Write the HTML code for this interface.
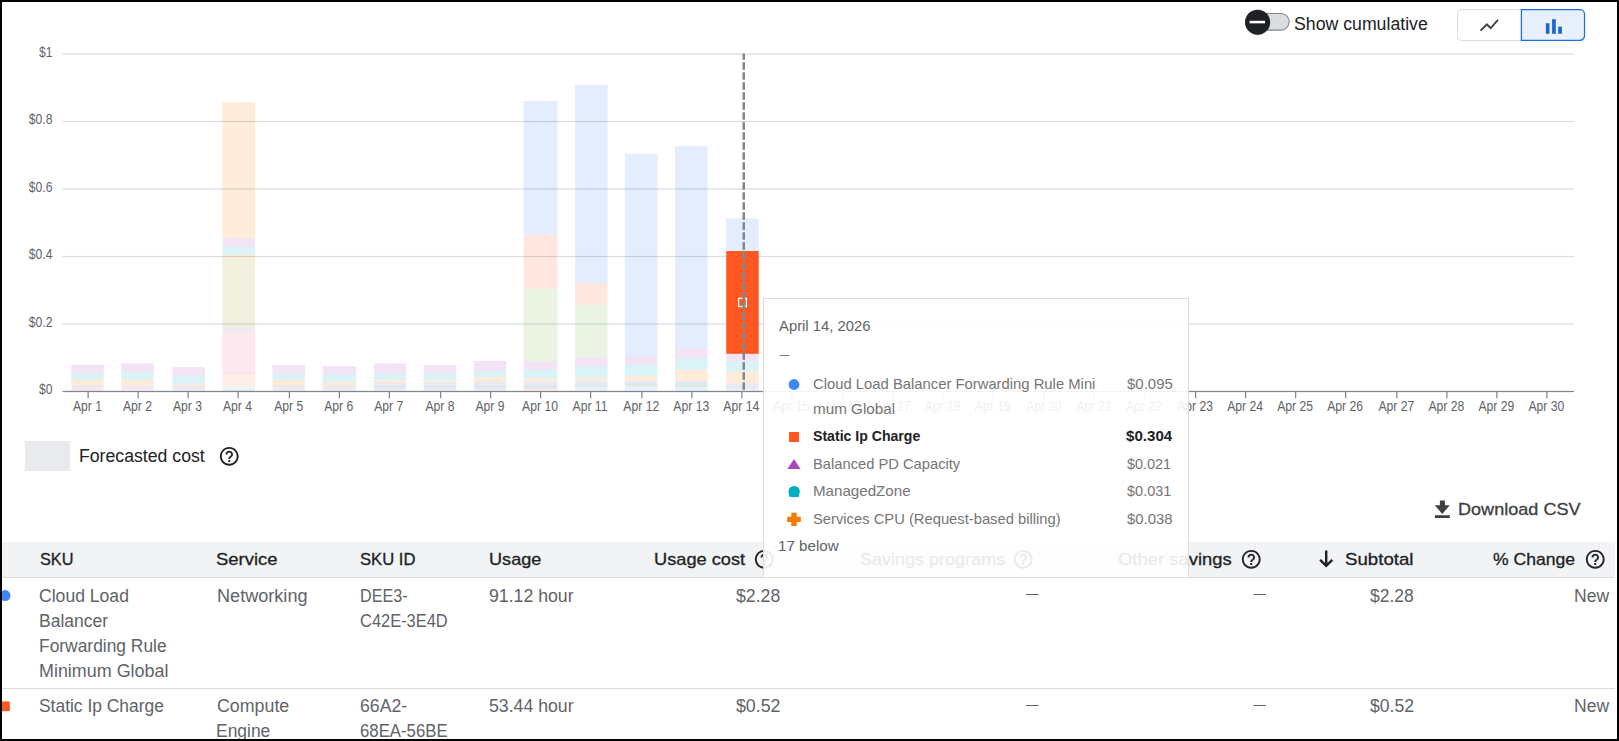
<!DOCTYPE html>
<html lang="en"><head><meta charset="utf-8"><title>Cost breakdown</title>
<style>
html,body{margin:0;padding:0}
body{position:relative;width:1619px;height:741px;overflow:hidden;background:#fff;font-family:"Liberation Sans",Arial,sans-serif;}
#chart{position:absolute;left:0;top:0}
.ax{font-family:"Liberation Sans",Arial,sans-serif;font-size:13.9px;fill:#5f6368}
.t{position:absolute;white-space:nowrap;line-height:0;height:0;display:block;transform-origin:0 0}
.t::before{content:"";display:inline-block;height:0;width:0}
.ic{position:absolute;display:block}
.abs{position:absolute}
#frame{position:absolute;left:0;top:0;width:1615px;height:737px;border:2px solid #000;z-index:50}
#thead{position:absolute;left:2px;top:542px;width:1612.5px;height:35px;background:#f1f3f4;border-bottom:1px solid #dadce0}
.rowline{position:absolute;left:2px;width:1612.5px;height:1px;background:#dadce0}
#tip{position:absolute;left:763px;top:298px;width:424px;height:278px;background:rgba(255,255,255,.9);border:1px solid #dadce0;z-index:10}
#tiptext{position:absolute;left:0;top:0;z-index:11}
.dash{position:absolute;height:1.4px;background:#5f6368}

</style></head><body>
<svg id="chart" width="1619" height="430" viewBox="0 0 1619 430">
<rect x="62.5" y="53.375" width="1511.5" height="1.25" fill="#dadce0"/>
<rect x="62.5" y="120.875" width="1511.5" height="1.25" fill="#dadce0"/>
<rect x="62.5" y="188.375" width="1511.5" height="1.25" fill="#dadce0"/>
<rect x="62.5" y="255.875" width="1511.5" height="1.25" fill="#dadce0"/>
<rect x="62.5" y="323.375" width="1511.5" height="1.25" fill="#dadce0"/>
<rect x="71.25" y="364.9" width="32.5" height="8.60" fill="#ab47bc" fill-opacity="0.15"/>
<rect x="71.25" y="373.5" width="32.5" height="6.50" fill="#00acc1" fill-opacity="0.15"/>
<rect x="71.25" y="380.0" width="32.5" height="5.90" fill="#f57c00" fill-opacity="0.15"/>
<rect x="71.25" y="385.9" width="32.5" height="2.20" fill="#5c6bc0" fill-opacity="0.15"/>
<rect x="71.25" y="388.1" width="32.5" height="2.90" fill="#f06292" fill-opacity="0.15"/>
<rect x="121.25" y="363.4" width="32.5" height="8.90" fill="#ab47bc" fill-opacity="0.15"/>
<rect x="121.25" y="372.3" width="32.5" height="7.70" fill="#00acc1" fill-opacity="0.15"/>
<rect x="121.25" y="380.0" width="32.5" height="6.00" fill="#f57c00" fill-opacity="0.15"/>
<rect x="121.25" y="386.0" width="32.5" height="2.10" fill="#5c6bc0" fill-opacity="0.15"/>
<rect x="121.25" y="388.1" width="32.5" height="2.90" fill="#f06292" fill-opacity="0.15"/>
<rect x="172.5" y="367.1" width="32.5" height="8.90" fill="#ab47bc" fill-opacity="0.15"/>
<rect x="172.5" y="376.0" width="32.5" height="7.70" fill="#00acc1" fill-opacity="0.15"/>
<rect x="172.5" y="383.7" width="32.5" height="2.20" fill="#f57c00" fill-opacity="0.15"/>
<rect x="172.5" y="385.9" width="32.5" height="2.70" fill="#5c6bc0" fill-opacity="0.15"/>
<rect x="172.5" y="388.6" width="32.5" height="1.20" fill="#f06292" fill-opacity="0.15"/>
<rect x="172.5" y="389.8" width="32.5" height="1.20" fill="#29b6f6" fill-opacity="0.15"/>
<rect x="222.5" y="102.3" width="32.5" height="135.90" fill="#f57c00" fill-opacity="0.15"/>
<rect x="222.5" y="238.2" width="32.5" height="8.80" fill="#ab47bc" fill-opacity="0.15"/>
<rect x="222.5" y="247.0" width="32.5" height="7.80" fill="#00acc1" fill-opacity="0.15"/>
<rect x="222.5" y="254.8" width="32.5" height="3.90" fill="#f57c00" fill-opacity="0.15"/>
<rect x="222.5" y="258.7" width="32.5" height="69.80" fill="#9e9d24" fill-opacity="0.15"/>
<rect x="222.5" y="328.5" width="32.5" height="2.50" fill="#5c6bc0" fill-opacity="0.15"/>
<rect x="222.5" y="331.0" width="32.5" height="41.20" fill="#f06292" fill-opacity="0.15"/>
<rect x="222.5" y="372.2" width="32.5" height="1.30" fill="#c2185b" fill-opacity="0.15"/>
<rect x="222.5" y="373.5" width="32.5" height="13.70" fill="#ff8a65" fill-opacity="0.15"/>
<rect x="222.5" y="387.2" width="32.5" height="2.80" fill="#26c6da" fill-opacity="0.15"/>
<rect x="222.5" y="390.0" width="32.5" height="1.00" fill="#e91e63" fill-opacity="0.15"/>
<rect x="272.5" y="365.0" width="32.5" height="8.50" fill="#ab47bc" fill-opacity="0.15"/>
<rect x="272.5" y="373.5" width="32.5" height="6.40" fill="#00acc1" fill-opacity="0.15"/>
<rect x="272.5" y="379.9" width="32.5" height="6.00" fill="#f57c00" fill-opacity="0.15"/>
<rect x="272.5" y="385.9" width="32.5" height="2.20" fill="#5c6bc0" fill-opacity="0.15"/>
<rect x="272.5" y="388.1" width="32.5" height="1.80" fill="#f06292" fill-opacity="0.15"/>
<rect x="272.5" y="389.9" width="32.5" height="1.10" fill="#29b6f6" fill-opacity="0.15"/>
<rect x="322.5" y="366.1" width="33.75" height="8.60" fill="#ab47bc" fill-opacity="0.15"/>
<rect x="322.5" y="374.7" width="33.75" height="7.20" fill="#00acc1" fill-opacity="0.15"/>
<rect x="322.5" y="381.9" width="33.75" height="4.00" fill="#f57c00" fill-opacity="0.15"/>
<rect x="322.5" y="385.9" width="33.75" height="2.20" fill="#5c6bc0" fill-opacity="0.15"/>
<rect x="322.5" y="388.1" width="33.75" height="1.80" fill="#f06292" fill-opacity="0.15"/>
<rect x="322.5" y="389.9" width="33.75" height="1.10" fill="#29b6f6" fill-opacity="0.15"/>
<rect x="373.75" y="363.4" width="32.5" height="10.10" fill="#ab47bc" fill-opacity="0.15"/>
<rect x="373.75" y="373.5" width="32.5" height="6.40" fill="#00acc1" fill-opacity="0.15"/>
<rect x="373.75" y="379.9" width="32.5" height="3.20" fill="#f57c00" fill-opacity="0.15"/>
<rect x="373.75" y="383.1" width="32.5" height="2.80" fill="#5c6bc0" fill-opacity="0.15"/>
<rect x="373.75" y="385.9" width="32.5" height="2.20" fill="#00796b" fill-opacity="0.15"/>
<rect x="373.75" y="388.1" width="32.5" height="1.80" fill="#f06292" fill-opacity="0.15"/>
<rect x="373.75" y="389.9" width="32.5" height="1.10" fill="#29b6f6" fill-opacity="0.15"/>
<rect x="423.75" y="365.0" width="32.5" height="8.50" fill="#ab47bc" fill-opacity="0.15"/>
<rect x="423.75" y="373.5" width="32.5" height="6.40" fill="#00acc1" fill-opacity="0.15"/>
<rect x="423.75" y="379.9" width="32.5" height="2.20" fill="#f57c00" fill-opacity="0.15"/>
<rect x="423.75" y="382.1" width="32.5" height="3.80" fill="#5c6bc0" fill-opacity="0.15"/>
<rect x="423.75" y="385.9" width="32.5" height="2.20" fill="#00796b" fill-opacity="0.15"/>
<rect x="423.75" y="388.1" width="32.5" height="1.80" fill="#f06292" fill-opacity="0.15"/>
<rect x="423.75" y="389.9" width="32.5" height="1.10" fill="#29b6f6" fill-opacity="0.15"/>
<rect x="473.75" y="361.0" width="32.5" height="9.90" fill="#ab47bc" fill-opacity="0.15"/>
<rect x="473.75" y="370.9" width="32.5" height="6.30" fill="#00acc1" fill-opacity="0.15"/>
<rect x="473.75" y="377.2" width="32.5" height="4.90" fill="#f57c00" fill-opacity="0.15"/>
<rect x="473.75" y="382.1" width="32.5" height="3.80" fill="#5c6bc0" fill-opacity="0.15"/>
<rect x="473.75" y="385.9" width="32.5" height="2.20" fill="#00796b" fill-opacity="0.15"/>
<rect x="473.75" y="388.1" width="32.5" height="1.80" fill="#f06292" fill-opacity="0.15"/>
<rect x="473.75" y="389.9" width="32.5" height="1.10" fill="#29b6f6" fill-opacity="0.15"/>
<rect x="523.75" y="101.0" width="33.75" height="133.70" fill="#4285f4" fill-opacity="0.15"/>
<rect x="523.75" y="234.7" width="33.75" height="53.90" fill="#ff5722" fill-opacity="0.15"/>
<rect x="523.75" y="288.6" width="33.75" height="72.40" fill="#7cb342" fill-opacity="0.15"/>
<rect x="523.75" y="361.0" width="33.75" height="8.90" fill="#ab47bc" fill-opacity="0.15"/>
<rect x="523.75" y="369.9" width="33.75" height="8.50" fill="#00acc1" fill-opacity="0.15"/>
<rect x="523.75" y="378.4" width="33.75" height="3.80" fill="#f57c00" fill-opacity="0.15"/>
<rect x="523.75" y="382.2" width="33.75" height="3.70" fill="#5c6bc0" fill-opacity="0.15"/>
<rect x="523.75" y="385.9" width="33.75" height="2.50" fill="#00796b" fill-opacity="0.15"/>
<rect x="523.75" y="388.4" width="33.75" height="2.60" fill="#f06292" fill-opacity="0.15"/>
<rect x="575.0" y="85.0" width="32.5" height="198.40" fill="#4285f4" fill-opacity="0.15"/>
<rect x="575.0" y="283.4" width="32.5" height="21.40" fill="#ff5722" fill-opacity="0.15"/>
<rect x="575.0" y="304.8" width="32.5" height="52.20" fill="#7cb342" fill-opacity="0.15"/>
<rect x="575.0" y="357.0" width="32.5" height="8.90" fill="#ab47bc" fill-opacity="0.15"/>
<rect x="575.0" y="365.9" width="32.5" height="11.20" fill="#00acc1" fill-opacity="0.15"/>
<rect x="575.0" y="377.1" width="32.5" height="3.90" fill="#f57c00" fill-opacity="0.15"/>
<rect x="575.0" y="381.0" width="32.5" height="4.00" fill="#5c6bc0" fill-opacity="0.15"/>
<rect x="575.0" y="385.0" width="32.5" height="2.00" fill="#00796b" fill-opacity="0.15"/>
<rect x="575.0" y="387.0" width="32.5" height="1.20" fill="#f06292" fill-opacity="0.15"/>
<rect x="575.0" y="388.2" width="32.5" height="2.00" fill="#29b6f6" fill-opacity="0.15"/>
<rect x="575.0" y="390.2" width="32.5" height="0.80" fill="#f06292" fill-opacity="0.15"/>
<rect x="625.0" y="153.6" width="32.5" height="202.30" fill="#4285f4" fill-opacity="0.15"/>
<rect x="625.0" y="355.9" width="32.5" height="9.00" fill="#ab47bc" fill-opacity="0.15"/>
<rect x="625.0" y="364.9" width="32.5" height="11.10" fill="#00acc1" fill-opacity="0.15"/>
<rect x="625.0" y="376.0" width="32.5" height="5.00" fill="#f57c00" fill-opacity="0.15"/>
<rect x="625.0" y="381.0" width="32.5" height="2.40" fill="#5c6bc0" fill-opacity="0.15"/>
<rect x="625.0" y="383.4" width="32.5" height="2.60" fill="#00796b" fill-opacity="0.15"/>
<rect x="625.0" y="386.0" width="32.5" height="1.20" fill="#f06292" fill-opacity="0.15"/>
<rect x="625.0" y="387.2" width="32.5" height="3.00" fill="#29b6f6" fill-opacity="0.15"/>
<rect x="625.0" y="390.2" width="32.5" height="0.80" fill="#f06292" fill-opacity="0.15"/>
<rect x="675.0" y="146.1" width="32.5" height="202.10" fill="#4285f4" fill-opacity="0.15"/>
<rect x="675.0" y="348.2" width="32.5" height="10.10" fill="#ab47bc" fill-opacity="0.15"/>
<rect x="675.0" y="358.3" width="32.5" height="11.60" fill="#00acc1" fill-opacity="0.15"/>
<rect x="675.0" y="369.9" width="32.5" height="11.10" fill="#f57c00" fill-opacity="0.15"/>
<rect x="675.0" y="381.0" width="32.5" height="2.40" fill="#5c6bc0" fill-opacity="0.15"/>
<rect x="675.0" y="383.4" width="32.5" height="3.60" fill="#00796b" fill-opacity="0.15"/>
<rect x="675.0" y="387.0" width="32.5" height="1.60" fill="#f06292" fill-opacity="0.15"/>
<rect x="675.0" y="388.6" width="32.5" height="2.40" fill="#29b6f6" fill-opacity="0.15"/>
<rect x="726.25" y="218.4" width="32.5" height="32.60" fill="#4285f4" fill-opacity="0.15"/>
<rect x="726.25" y="251.0" width="32.5" height="102.80" fill="#ff5722"/>
<rect x="726.25" y="353.8" width="32.5" height="7.20" fill="#ab47bc" fill-opacity="0.15"/>
<rect x="726.25" y="361.0" width="32.5" height="10.20" fill="#00acc1" fill-opacity="0.15"/>
<rect x="726.25" y="371.2" width="32.5" height="12.20" fill="#f57c00" fill-opacity="0.15"/>
<rect x="726.25" y="383.4" width="32.5" height="3.60" fill="#5c6bc0" fill-opacity="0.15"/>
<rect x="726.25" y="387.0" width="32.5" height="1.00" fill="#00796b" fill-opacity="0.15"/>
<rect x="726.25" y="388.0" width="32.5" height="1.80" fill="#f06292" fill-opacity="0.15"/>
<rect x="726.25" y="389.8" width="32.5" height="1.20" fill="#29b6f6" fill-opacity="0.15"/>
<rect x="62.5" y="390.875" width="1511.5" height="1.25" fill="#80868b"/>
<rect x="87.500" y="392" width="1.25" height="6.25" fill="#80868b"/>
<rect x="137.500" y="392" width="1.25" height="6.25" fill="#80868b"/>
<rect x="187.500" y="392" width="1.25" height="6.25" fill="#80868b"/>
<rect x="237.500" y="392" width="1.25" height="6.25" fill="#80868b"/>
<rect x="288.750" y="392" width="1.25" height="6.25" fill="#80868b"/>
<rect x="338.750" y="392" width="1.25" height="6.25" fill="#80868b"/>
<rect x="388.750" y="392" width="1.25" height="6.25" fill="#80868b"/>
<rect x="440.000" y="392" width="1.25" height="6.25" fill="#80868b"/>
<rect x="490.000" y="392" width="1.25" height="6.25" fill="#80868b"/>
<rect x="540.000" y="392" width="1.25" height="6.25" fill="#80868b"/>
<rect x="590.000" y="392" width="1.25" height="6.25" fill="#80868b"/>
<rect x="641.250" y="392" width="1.25" height="6.25" fill="#80868b"/>
<rect x="691.250" y="392" width="1.25" height="6.25" fill="#80868b"/>
<rect x="741.250" y="392" width="1.25" height="6.25" fill="#80868b"/>
<rect x="791.250" y="392" width="1.25" height="6.25" fill="#80868b"/>
<rect x="842.500" y="392" width="1.25" height="6.25" fill="#80868b"/>
<rect x="892.500" y="392" width="1.25" height="6.25" fill="#80868b"/>
<rect x="942.500" y="392" width="1.25" height="6.25" fill="#80868b"/>
<rect x="992.500" y="392" width="1.25" height="6.25" fill="#80868b"/>
<rect x="1043.750" y="392" width="1.25" height="6.25" fill="#80868b"/>
<rect x="1093.750" y="392" width="1.25" height="6.25" fill="#80868b"/>
<rect x="1143.750" y="392" width="1.25" height="6.25" fill="#80868b"/>
<rect x="1195.000" y="392" width="1.25" height="6.25" fill="#80868b"/>
<rect x="1245.000" y="392" width="1.25" height="6.25" fill="#80868b"/>
<rect x="1295.000" y="392" width="1.25" height="6.25" fill="#80868b"/>
<rect x="1345.000" y="392" width="1.25" height="6.25" fill="#80868b"/>
<rect x="1396.250" y="392" width="1.25" height="6.25" fill="#80868b"/>
<rect x="1446.250" y="392" width="1.25" height="6.25" fill="#80868b"/>
<rect x="1496.250" y="392" width="1.25" height="6.25" fill="#80868b"/>
<rect x="1546.250" y="392" width="1.25" height="6.25" fill="#80868b"/>
<text transform="translate(87.53,411) scale(.875,1)" text-anchor="middle" class="ax">Apr 1</text>
<text transform="translate(137.53,411) scale(.875,1)" text-anchor="middle" class="ax">Apr 2</text>
<text transform="translate(187.53,411) scale(.875,1)" text-anchor="middle" class="ax">Apr 3</text>
<text transform="translate(237.53,411) scale(.875,1)" text-anchor="middle" class="ax">Apr 4</text>
<text transform="translate(288.77,411) scale(.875,1)" text-anchor="middle" class="ax">Apr 5</text>
<text transform="translate(338.77,411) scale(.875,1)" text-anchor="middle" class="ax">Apr 6</text>
<text transform="translate(388.77,411) scale(.875,1)" text-anchor="middle" class="ax">Apr 7</text>
<text transform="translate(440.02,411) scale(.875,1)" text-anchor="middle" class="ax">Apr 8</text>
<text transform="translate(490.02,411) scale(.875,1)" text-anchor="middle" class="ax">Apr 9</text>
<text transform="translate(540.02,411) scale(.875,1)" text-anchor="middle" class="ax">Apr 10</text>
<text transform="translate(590.02,411) scale(.875,1)" text-anchor="middle" class="ax">Apr 11</text>
<text transform="translate(641.27,411) scale(.875,1)" text-anchor="middle" class="ax">Apr 12</text>
<text transform="translate(691.27,411) scale(.875,1)" text-anchor="middle" class="ax">Apr 13</text>
<text transform="translate(741.27,411) scale(.875,1)" text-anchor="middle" class="ax">Apr 14</text>
<text transform="translate(791.27,411) scale(.875,1)" text-anchor="middle" class="ax">Apr 15</text>
<text transform="translate(842.52,411) scale(.875,1)" text-anchor="middle" class="ax">Apr 16</text>
<text transform="translate(892.52,411) scale(.875,1)" text-anchor="middle" class="ax">Apr 17</text>
<text transform="translate(942.52,411) scale(.875,1)" text-anchor="middle" class="ax">Apr 18</text>
<text transform="translate(992.52,411) scale(.875,1)" text-anchor="middle" class="ax">Apr 19</text>
<text transform="translate(1043.78,411) scale(.875,1)" text-anchor="middle" class="ax">Apr 20</text>
<text transform="translate(1093.78,411) scale(.875,1)" text-anchor="middle" class="ax">Apr 21</text>
<text transform="translate(1143.78,411) scale(.875,1)" text-anchor="middle" class="ax">Apr 22</text>
<text transform="translate(1195.03,411) scale(.875,1)" text-anchor="middle" class="ax">Apr 23</text>
<text transform="translate(1245.03,411) scale(.875,1)" text-anchor="middle" class="ax">Apr 24</text>
<text transform="translate(1295.03,411) scale(.875,1)" text-anchor="middle" class="ax">Apr 25</text>
<text transform="translate(1345.03,411) scale(.875,1)" text-anchor="middle" class="ax">Apr 26</text>
<text transform="translate(1396.28,411) scale(.875,1)" text-anchor="middle" class="ax">Apr 27</text>
<text transform="translate(1446.28,411) scale(.875,1)" text-anchor="middle" class="ax">Apr 28</text>
<text transform="translate(1496.28,411) scale(.875,1)" text-anchor="middle" class="ax">Apr 29</text>
<text transform="translate(1546.28,411) scale(.875,1)" text-anchor="middle" class="ax">Apr 30</text>
<text transform="translate(52.4,56.7) scale(.875,1)" text-anchor="end" class="ax">$1</text>
<text transform="translate(52.4,124.2) scale(.875,1)" text-anchor="end" class="ax">$0.8</text>
<text transform="translate(52.4,191.7) scale(.875,1)" text-anchor="end" class="ax">$0.6</text>
<text transform="translate(52.4,259.2) scale(.875,1)" text-anchor="end" class="ax">$0.4</text>
<text transform="translate(52.4,326.7) scale(.875,1)" text-anchor="end" class="ax">$0.2</text>
<text transform="translate(52.4,394.2) scale(.875,1)" text-anchor="end" class="ax">$0</text>
<line x1="743.75" y1="53.4" x2="743.75" y2="391" stroke="#80868b" stroke-width="2.5" stroke-dasharray="7.5 2.5" stroke-dashoffset="1.1"/>
<line x1="743.75" y1="251" x2="743.75" y2="353.8" stroke="#788c96" stroke-width="2.5" stroke-dasharray="7.5 2.5" stroke-dashoffset="8.7"/>
<rect x="738.6" y="298.3" width="7.8" height="8.2" fill="none" stroke="#fff" stroke-width="1.25"/>
<line x1="743.75" y1="292.3" x2="743.75" y2="312.3" stroke="#788c96" stroke-width="2.5" stroke-dasharray="7.5 2.5"/>
</svg>
<svg class="ic" style="left:1236px;top:2px;overflow:visible" width="62" height="40" viewBox="1236 2 62 40"><rect x="1245.6" y="13.55" width="43.6" height="16.6" rx="8.3" fill="#dadce0" stroke="#80868b" stroke-width="1.1"/><circle cx="1257.6" cy="22.9" r="12.6" fill="#000" opacity=".12"/><circle cx="1257.6" cy="22.5" r="12.9" fill="#000" opacity=".06"/><circle cx="1257.6" cy="22.15" r="12.5" fill="#202124"/><rect x="1249.6" y="20.8" width="15.4" height="2.55" fill="#fff"/></svg>
<div class="abs" style="left:1457px;top:9px;width:64px;height:30px;border:1px solid #dadce0;border-right:none;border-radius:5px 0 0 5px;background:#fff"></div>
<svg class="ic" style="left:1518px;top:6px" width="70" height="38" viewBox="1518 6 70 38"><path d="M1521.4 9.5H1580a4.5 4.5 0 0 1 4.5 4.5V35.8a4.5 4.5 0 0 1 -4.5 4.5H1521.4z" fill="#e8f0fe" stroke="#1a6ddd" stroke-width="1.25"/></svg>
<svg class="ic" style="left:1478.25px;top:13.7px" width="22.5" height="22.5" viewBox="0 0 24 24"><path fill="#3c4043" d="M3.5 18.49l6-6.01 4 4L22 6.92l-1.41-1.41-7.09 7.97-4-4L2 16.99z"/></svg>
<svg class="ic" style="left:1540px;top:15px" width="30" height="24" viewBox="1540 15 30 24"><g fill="#1967d2"><rect x="1545.9" y="23.2" width="3.55" height="10.6"/><rect x="1552.1" y="19.2" width="3.7" height="14.6"/><rect x="1558.2" y="26.7" width="3.7" height="7.1"/></g></svg>
<div class="abs" style="left:25px;top:441px;width:45px;height:30px;background:#e8eaed"></div>
<svg class="ic" style="left:218.15px;top:444.95px" width="22.5" height="22.5" viewBox="0 0 24 24"><path fill="#202124" d="M11 18h2v-2h-2v2zm1-16C6.48 2 2 6.48 2 12s4.48 10 10 10 10-4.48 10-10S17.52 2 12 2zm0 18c-4.41 0-8-3.59-8-8s3.59-8 8-8 8 3.59 8 8-3.59 8-8 8zm0-14c-2.21 0-4 1.79-4 4h2c0-1.1.9-2 2-2s2 .9 2 2c0 2-3 1.75-3 5h2c0-2.25 3-2.5 3-5 0-2.21-1.79-4-4-4z"/></svg>
<svg class="ic" style="left:1430px;top:497px" width="24" height="24" viewBox="1430 497 24 24"><path fill="#3c4043" d="M1439.9 500.6H1444.9V505.3H1449.7L1442.3 514L1434.8 505.3H1439.9zM1434.9 515.3H1449.8V518H1434.9z"/></svg>
<div id="thead"></div>
<div class="rowline" style="top:688px"></div>
<svg class="ic" style="left:753.05px;top:548.05px" width="22.5" height="22.5" viewBox="0 0 24 24"><path fill="#202124" d="M11 18h2v-2h-2v2zm1-16C6.48 2 2 6.48 2 12s4.48 10 10 10 10-4.48 10-10S17.52 2 12 2zm0 18c-4.41 0-8-3.59-8-8s3.59-8 8-8 8 3.59 8 8-3.59 8-8 8zm0-14c-2.21 0-4 1.79-4 4h2c0-1.1.9-2 2-2s2 .9 2 2c0 2-3 1.75-3 5h2c0-2.25 3-2.5 3-5 0-2.21-1.79-4-4-4z"/></svg>
<svg class="ic" style="left:1012.15px;top:548.05px" width="22.5" height="22.5" viewBox="0 0 24 24"><path fill="#202124" d="M11 18h2v-2h-2v2zm1-16C6.48 2 2 6.48 2 12s4.48 10 10 10 10-4.48 10-10S17.52 2 12 2zm0 18c-4.41 0-8-3.59-8-8s3.59-8 8-8 8 3.59 8 8-3.59 8-8 8zm0-14c-2.21 0-4 1.79-4 4h2c0-1.1.9-2 2-2s2 .9 2 2c0 2-3 1.75-3 5h2c0-2.25 3-2.5 3-5 0-2.21-1.79-4-4-4z"/></svg>
<svg class="ic" style="left:1240.15px;top:548.05px" width="22.5" height="22.5" viewBox="0 0 24 24"><path fill="#202124" d="M11 18h2v-2h-2v2zm1-16C6.48 2 2 6.48 2 12s4.48 10 10 10 10-4.48 10-10S17.52 2 12 2zm0 18c-4.41 0-8-3.59-8-8s3.59-8 8-8 8 3.59 8 8-3.59 8-8 8zm0-14c-2.21 0-4 1.79-4 4h2c0-1.1.9-2 2-2s2 .9 2 2c0 2-3 1.75-3 5h2c0-2.25 3-2.5 3-5 0-2.21-1.79-4-4-4z"/></svg>
<svg class="ic" style="left:1583.55px;top:548.05px" width="22.5" height="22.5" viewBox="0 0 24 24"><path fill="#202124" d="M11 18h2v-2h-2v2zm1-16C6.48 2 2 6.48 2 12s4.48 10 10 10 10-4.48 10-10S17.52 2 12 2zm0 18c-4.41 0-8-3.59-8-8s3.59-8 8-8 8 3.59 8 8-3.59 8-8 8zm0-14c-2.21 0-4 1.79-4 4h2c0-1.1.9-2 2-2s2 .9 2 2c0 2-3 1.75-3 5h2c0-2.25 3-2.5 3-5 0-2.21-1.79-4-4-4z"/></svg>
<svg class="ic" style="left:1316px;top:548px" width="21" height="22" viewBox="1316 548 21 22"><path d="M1326.2 550.4V566M1320.1 559.8L1326.2 565.9L1332.3 559.8" fill="none" stroke="#202124" stroke-width="2.4"/></svg>
<svg class="ic" style="left:0;top:588px" width="14" height="16" viewBox="0 588 14 16"><circle cx="5" cy="595.6" r="5.5" fill="#4285f4"/></svg>
<svg class="ic" style="left:0;top:699px" width="14" height="16" viewBox="0 699 14 16"><rect x="0.25" y="701.5" width="9.6" height="9.6" fill="#ff5722"/></svg>
<span class="t td" style="left:1026.0px;top:594.4px;font-size:12.2px;color:#5f6368;-webkit-text-stroke:.3px #5f6368">—</span>
<span class="t td" style="left:1253.5px;top:594.4px;font-size:12.2px;color:#5f6368;-webkit-text-stroke:.3px #5f6368">—</span>
<span class="t td" style="left:1026.0px;top:704.7px;font-size:12.2px;color:#5f6368;-webkit-text-stroke:.3px #5f6368">—</span>
<span class="t td" style="left:1253.5px;top:704.7px;font-size:12.2px;color:#5f6368;-webkit-text-stroke:.3px #5f6368">—</span>
<span class="t top" style="left:1294.12px;top:23.60px;font-size:17.5px;color:#202124;transform:scaleX(1.0113)">Show cumulative</span>
<span class="t legend" style="left:79.41px;top:455.90px;font-size:17.5px;color:#202124;transform:scaleX(1.0098)">Forecasted cost</span>
<span class="t dl" style="left:1457.74px;top:509.70px;font-size:17.0px;color:#3c4043;transform:scaleX(1.0629);-webkit-text-stroke:0.3px #3c4043">Download CSV</span>
<span class="t th" style="left:39.78px;top:559.70px;font-size:17.0px;color:#202124;transform:scaleX(0.9582);-webkit-text-stroke:0.3px #202124">SKU</span>
<span class="t th" style="left:216.49px;top:559.70px;font-size:17.0px;color:#202124;transform:scaleX(1.0848);-webkit-text-stroke:0.3px #202124">Service</span>
<span class="t th" style="left:359.87px;top:559.70px;font-size:17.0px;color:#202124;transform:scaleX(0.9778);-webkit-text-stroke:0.3px #202124">SKU ID</span>
<span class="t th" style="left:488.97px;top:559.70px;font-size:17.0px;color:#202124;transform:scaleX(1.0653);-webkit-text-stroke:0.3px #202124">Usage</span>
<span class="t th" style="left:654.26px;top:559.70px;font-size:17.0px;color:#202124;transform:scaleX(1.0714);-webkit-text-stroke:0.3px #202124">Usage cost</span>
<span class="t th" style="left:859.51px;top:559.70px;font-size:17.0px;color:#202124;transform:scaleX(1.0595);-webkit-text-stroke:0.3px #202124">Savings programs</span>
<span class="t th" style="left:1118.39px;top:559.70px;font-size:17.0px;color:#202124;transform:scaleX(1.0841);-webkit-text-stroke:0.3px #202124">Other savings</span>
<span class="t th" style="left:1345.38px;top:559.70px;font-size:17.0px;color:#202124;transform:scaleX(1.0975);-webkit-text-stroke:0.3px #202124">Subtotal</span>
<span class="t th" style="left:1493.05px;top:559.70px;font-size:17.0px;color:#202124;transform:scaleX(1.0346);-webkit-text-stroke:0.3px #202124">% Change</span>
<span class="t td" style="left:39.42px;top:595.70px;font-size:17.5px;color:#5f6368;transform:scaleX(1.0046)">Cloud Load</span>
<span class="t td" style="left:39.42px;top:620.70px;font-size:17.5px;color:#5f6368;transform:scaleX(1.0004)">Balancer</span>
<span class="t td" style="left:39.43px;top:645.70px;font-size:17.5px;color:#5f6368;transform:scaleX(0.9941)">Forwarding Rule</span>
<span class="t td" style="left:39.39px;top:670.70px;font-size:17.5px;color:#5f6368;transform:scaleX(1.0236)">Minimum Global</span>
<span class="t td" style="left:216.88px;top:595.70px;font-size:17.5px;color:#5f6368;transform:scaleX(1.0341)">Networking</span>
<span class="t td" style="left:360.03px;top:595.70px;font-size:17.5px;color:#5f6368;transform:scaleX(0.9215)">DEE3-</span>
<span class="t td" style="left:360.48px;top:620.70px;font-size:17.5px;color:#5f6368;transform:scaleX(0.9397)">C42E-3E4D</span>
<span class="t td" style="left:489.24px;top:595.70px;font-size:17.5px;color:#5f6368;transform:scaleX(1.0106)">91.12 hour</span>
<span class="t td" style="left:736.05px;top:595.70px;font-size:17.5px;color:#5f6368;transform:scaleX(1.0105)">$2.28</span>
<span class="t td" style="left:1369.85px;top:595.70px;font-size:17.5px;color:#5f6368;transform:scaleX(1.0012)">$2.28</span>
<span class="t td" style="left:1574.02px;top:595.70px;font-size:17.5px;color:#5f6368;transform:scaleX(1.0022)">New</span>
<span class="t td" style="left:39.43px;top:706.30px;font-size:17.5px;color:#5f6368;transform:scaleX(0.9954)">Static Ip Charge</span>
<span class="t td" style="left:216.91px;top:706.30px;font-size:17.5px;color:#5f6368;transform:scaleX(1.0177)">Compute</span>
<span class="t td" style="left:216.43px;top:731.30px;font-size:17.5px;color:#5f6368;transform:scaleX(0.9967)">Engine</span>
<span class="t td" style="left:360.42px;top:706.30px;font-size:17.5px;color:#5f6368;transform:scaleX(1.0083)">66A2-</span>
<span class="t td" style="left:360.46px;top:731.30px;font-size:17.5px;color:#5f6368;transform:scaleX(0.958)">68EA-56BE</span>
<span class="t td" style="left:489.24px;top:706.30px;font-size:17.5px;color:#5f6368;transform:scaleX(1.0106)">53.44 hour</span>
<span class="t td" style="left:736.05px;top:706.30px;font-size:17.5px;color:#5f6368;transform:scaleX(1.0135)">$0.52</span>
<span class="t td" style="left:1369.85px;top:706.30px;font-size:17.5px;color:#5f6368;transform:scaleX(1.0041)">$0.52</span>
<span class="t td" style="left:1574.02px;top:706.30px;font-size:17.5px;color:#5f6368;transform:scaleX(1.0022)">New</span>
<div id="tip"></div>
<div id="tiptext">
<span class="t tt" style="left:779.4px;top:355.0px;font-size:10px;color:#5f6368">—</span>
<span class="t tt" style="left:778.98px;top:325.90px;font-size:15px;color:#5f6368;transform:scaleX(0.9886)">April 14, 2026</span>
<span class="t tt" style="left:813.06px;top:384.00px;font-size:15px;color:#757575;transform:scaleX(0.9875)">Cloud Load Balancer Forwarding Rule Mini</span>
<span class="t tt" style="left:812.78px;top:408.90px;font-size:15px;color:#757575;transform:scaleX(1.0155)">mum Global</span>
<span class="t tt" style="left:1127.18px;top:384.00px;font-size:15px;color:#757575;transform:scaleX(0.9994)">$0.095</span>
<span class="t tt" style="left:813.33px;top:435.80px;font-size:15px;color:#202124;transform:scaleX(0.9397);font-weight:700">Static Ip Charge</span>
<span class="t tt" style="left:1126.35px;top:435.80px;font-size:15px;color:#202124;transform:scaleX(1.0066);font-weight:700">$0.304</span>
<span class="t tt" style="left:812.57px;top:464.00px;font-size:15px;color:#757575;transform:scaleX(0.9808)">Balanced PD Capacity</span>
<span class="t tt" style="left:1127.18px;top:464.00px;font-size:15px;color:#757575;transform:scaleX(0.96)">$0.021</span>
<span class="t tt" style="left:812.54px;top:491.20px;font-size:15px;color:#757575;transform:scaleX(1.0087)">ManagedZone</span>
<span class="t tt" style="left:1127.28px;top:491.20px;font-size:15px;color:#757575;transform:scaleX(0.9667)">$0.031</span>
<span class="t tt" style="left:812.76px;top:519.10px;font-size:15px;color:#757575;transform:scaleX(0.9835)">Services CPU (Request-based billing)</span>
<span class="t tt" style="left:1127.28px;top:519.10px;font-size:15px;color:#757575;transform:scaleX(0.9928)">$0.038</span>
<span class="t tt" style="left:777.86px;top:545.60px;font-size:15px;color:#5f6368;transform:scaleX(1.0119)">17 below</span>
<svg class="ic" style="left:786px;top:377px" width="16" height="16" viewBox="786 377 16 16"><circle cx="794" cy="384.5" r="5.4" fill="#4285f4"/></svg>
<div class="abs" style="left:789px;top:431.5px;width:10px;height:10px;background:#ff5722"></div>
<svg class="ic" style="left:786px;top:457px" width="16" height="14" viewBox="786 457 16 14"><path fill="#ab47bc" d="M794 458.9L800.6 468.9H787.4z"/></svg>
<svg class="ic" style="left:786px;top:485px" width="16" height="14" viewBox="786 485 16 14"><g fill="#00acc1"><circle cx="794.1" cy="491.6" r="5.7"/><rect x="789.1" y="491.6" width="10" height="5.2"/></g></svg>
<svg class="ic" style="left:786px;top:511px" width="16" height="17" viewBox="786 511 16 17"><path fill="#f57c00" d="M791.3 512.8h5.4v3.9h4.1v5.3h-4.1v3.9h-5.4v-3.9h-4.1v-5.3h4.1z"/></svg>
</div>
<div id="frame"></div>
</body></html>
